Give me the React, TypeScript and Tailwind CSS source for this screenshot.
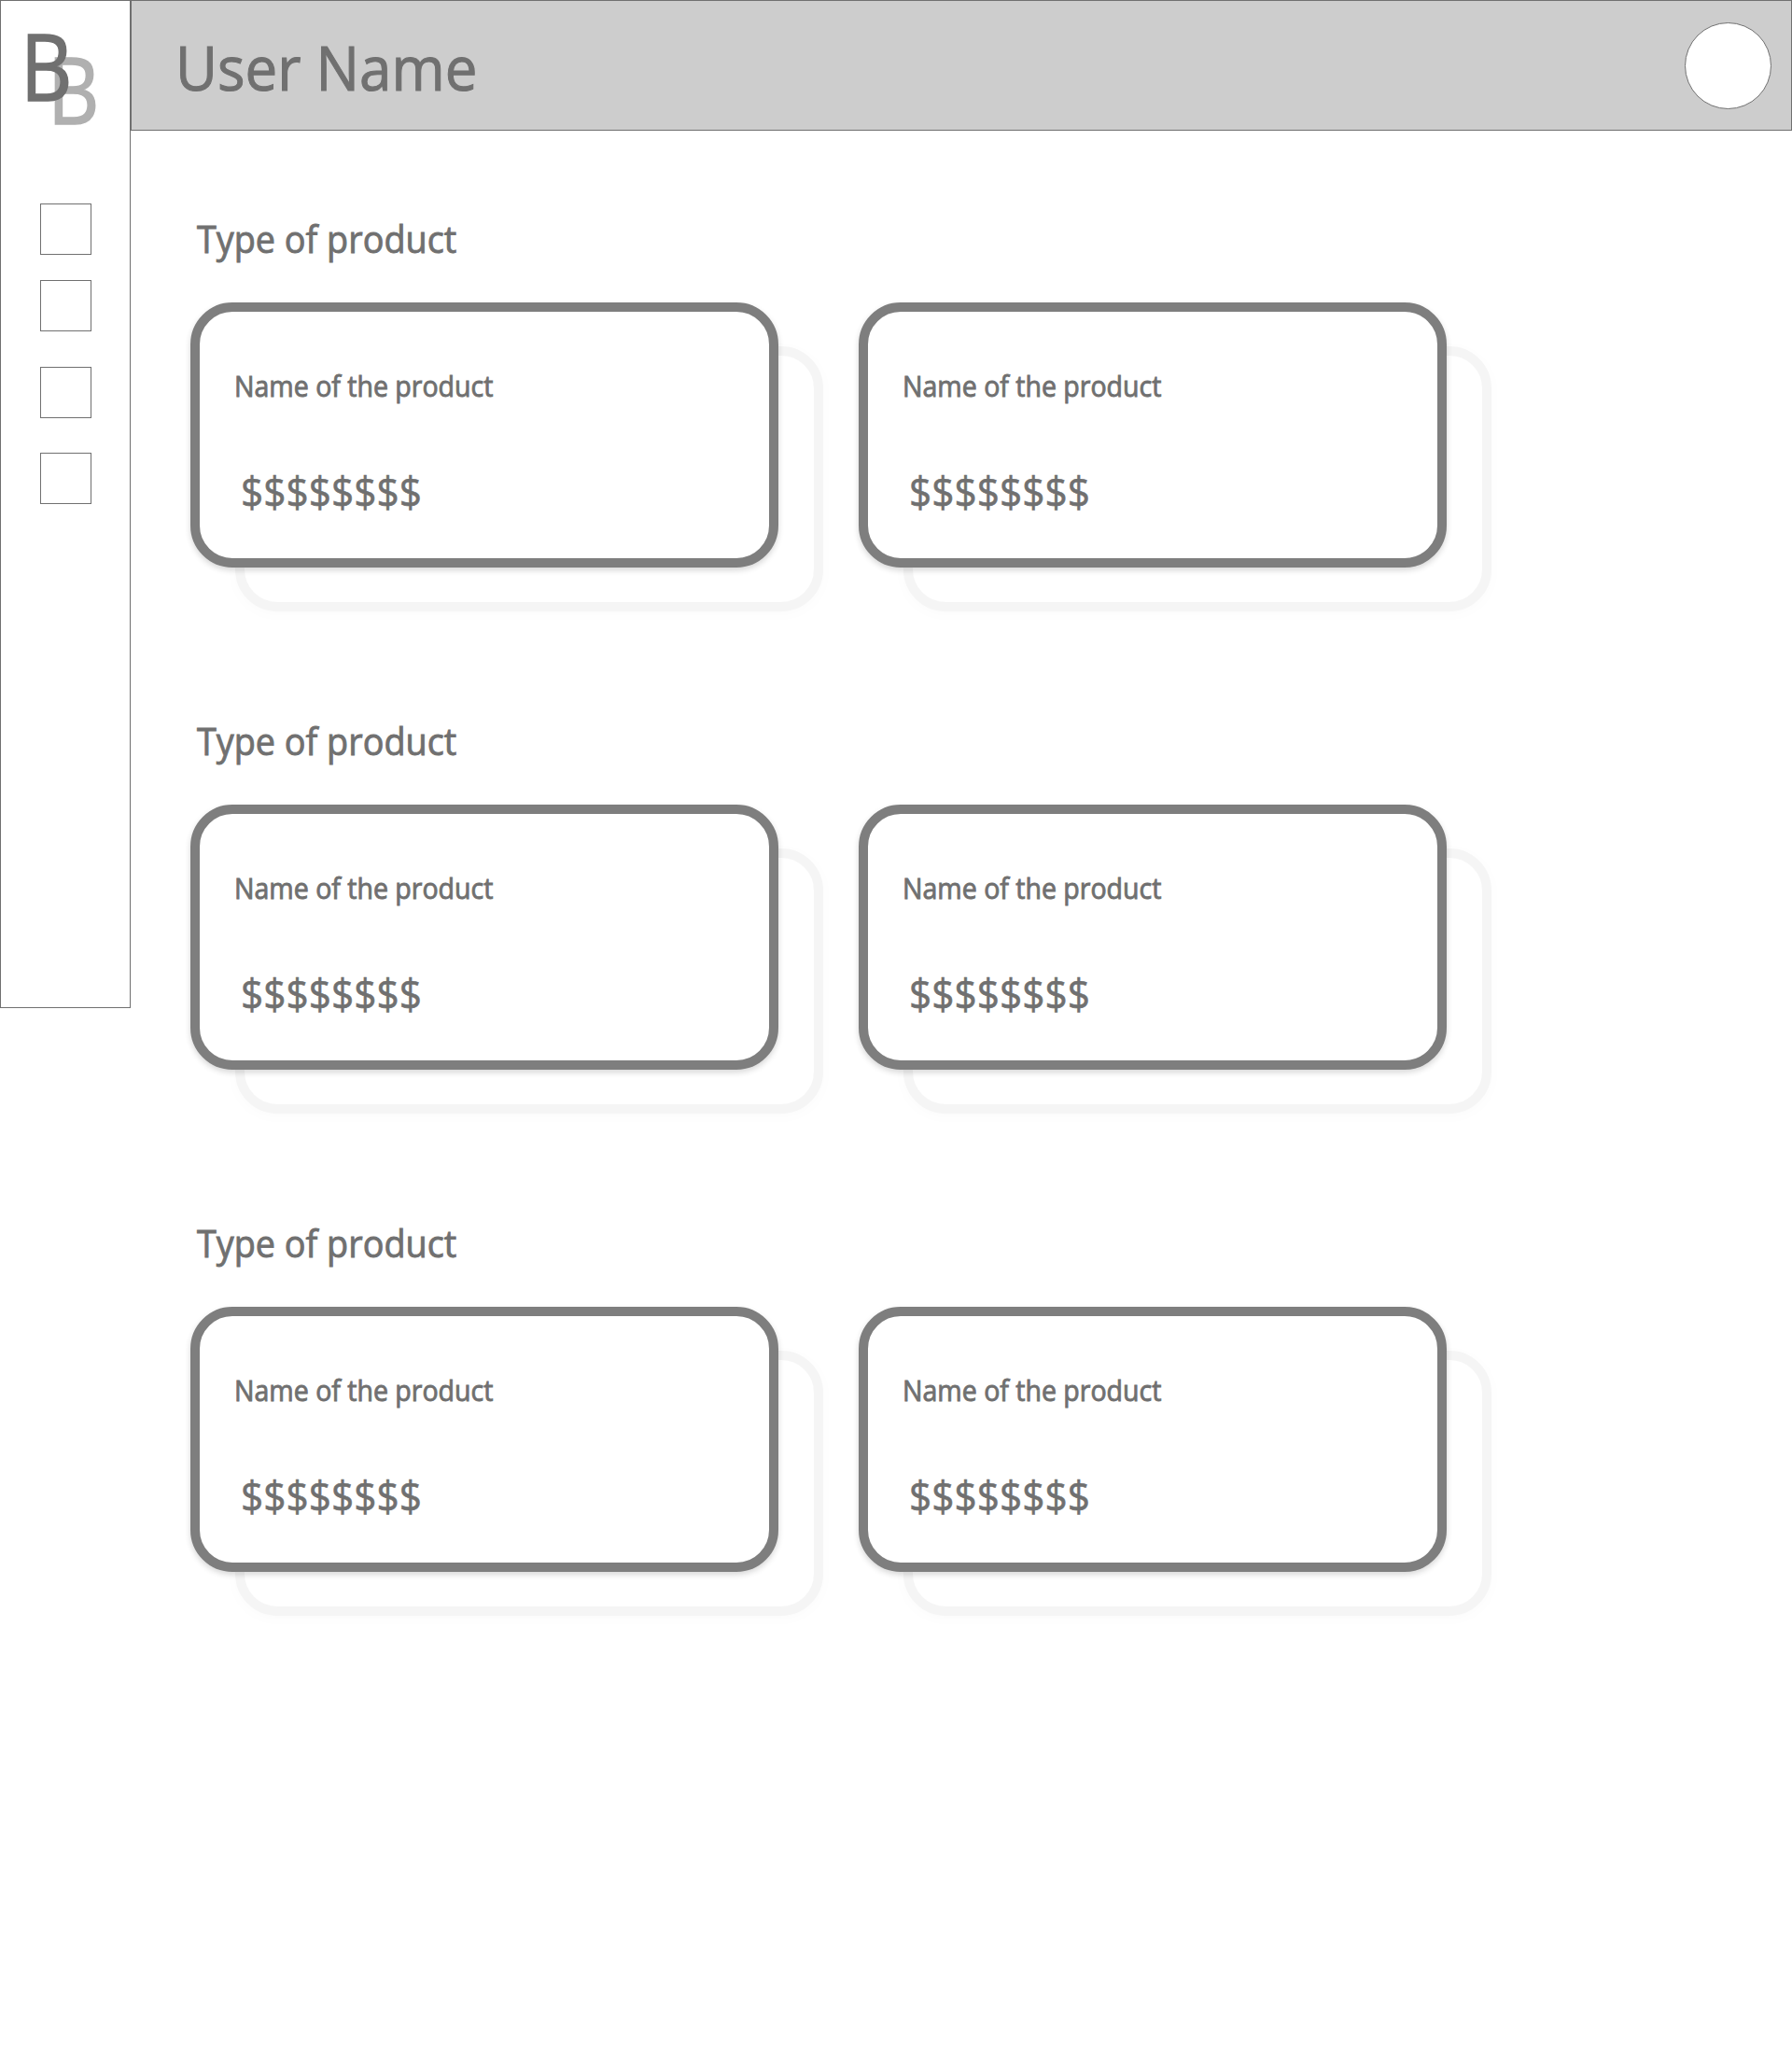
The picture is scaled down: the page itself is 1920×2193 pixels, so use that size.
const sections = ["first", "second", "third"];
const shortcuts = ["mt-[217px]", "mt-[27px]", "mt-[38px]", "mt-[37px]"];

function Logo() {
  return (
    <div className="absolute left-0 top-0 h-[160px] w-[138px] text-[98.5px] leading-[120px]">
      <span className="absolute left-[50px] top-[34px] origin-left scale-x-[0.87] text-[#b0b0b0] [-webkit-text-stroke:1.6px_#b0b0b0]">B</span>
      <span className="absolute left-[21px] top-[9px] origin-left scale-x-[0.87] text-[#707070] [-webkit-text-stroke:1.6px_#707070]">B</span>
    </div>
  );
}

function ProductCard() {
  return (
    <article className="relative h-[284px] w-[630px]">
      <div className="absolute left-[48px] top-[47px] h-[284px] w-[630px] rounded-[45px] border-[10px] border-[#7e7e7e] bg-white opacity-[0.07] shadow-[0_3px_6px_rgba(0,0,0,0.16)]" />
      <div className="relative flex h-full flex-col items-start rounded-[45px] border-[10px] border-[#7e7e7e] bg-white pl-[36px] pt-[57px] shadow-[0_3px_6px_rgba(0,0,0,0.16)]">
        <h3 className="ml-px origin-left scale-x-[0.932] whitespace-nowrap text-[30.6px] leading-[44px] [-webkit-text-stroke:0.9px_#707070]">
          Name of the product
        </h3>
        <p className="ml-[8px] mt-[61px] origin-left scale-x-[0.912] whitespace-nowrap text-[46.5px] leading-[60px] [-webkit-text-stroke:0.6px_#707070]">
          $$$$$$$$
        </p>
      </div>
    </article>
  );
}

export default function App() {
  return (
    <div className="flex h-[2193px] w-[1920px] items-start overflow-hidden bg-white font-['Open_Sans',sans-serif] text-[#707070]">
      <aside className="relative flex h-[1080px] w-[140px] shrink-0 flex-col items-start border border-[#707070] bg-white pl-[42px]">
        <Logo />
        {shortcuts.map((spacing) => (
          <div key={spacing} className={`size-[55px] shrink-0 border border-[#707070] bg-white ${spacing}`} />
        ))}
      </aside>
      <div className="flex flex-1 flex-col">
        <header className="flex h-[140px] items-center justify-between border border-[#707070] bg-[#cdcdcd] pl-[47px] pr-[21px]">
          <h1 className="origin-left scale-x-[0.931] whitespace-nowrap pt-px text-[66.4px] leading-[90px] [-webkit-text-stroke:1.1px_#707070]">
            User Name
          </h1>
          <div className="size-[93px] rounded-full border border-[#707070] bg-white" />
        </header>
        <main className="flex flex-col gap-[155px] pl-[64px] pt-[85px]">
          {sections.map((id) => (
            <section key={id}>
              <h2 className="ml-[7px] w-fit origin-left scale-x-[0.931] whitespace-nowrap pt-px text-[40.6px] leading-[60px] [-webkit-text-stroke:0.9px_#707070]">
                Type of product
              </h2>
              <div className="mt-[38px] flex gap-[86px]">
                <ProductCard />
                <ProductCard />
              </div>
            </section>
          ))}
        </main>
      </div>
    </div>
  );
}
